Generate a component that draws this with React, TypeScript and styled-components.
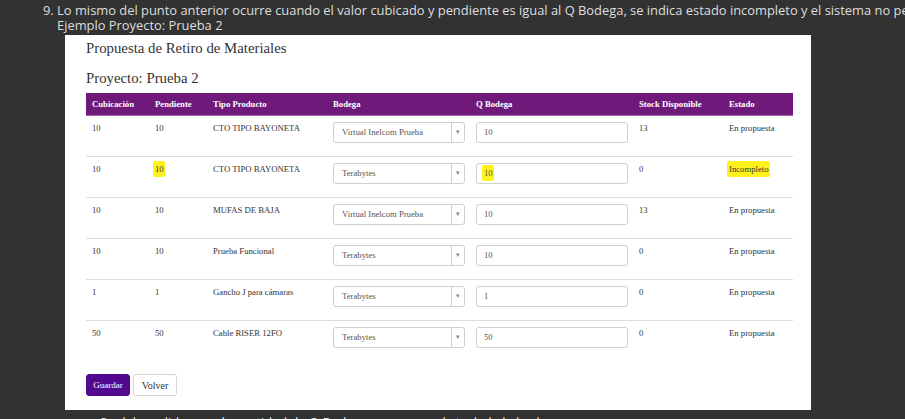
import React from 'react';
import styled, { createGlobalStyle } from 'styled-components';

const GlobalStyle = createGlobalStyle`
    body {
        margin: 0;
        background: #323232;
        overflow: hidden;
    }
`;

type Row = {
    cubicacion: string;
    pendiente: string;
    producto: string;
    bodega: string;
    qBodega: string;
    stock: string;
    estado: string;
    marked?: boolean;
};

const rows: Row[] = [
    { cubicacion: '10', pendiente: '10', producto: 'CTO TIPO BAYONETA', bodega: 'Virtual Inelcom Prueba', qBodega: '10', stock: '13', estado: 'En propuesta' },
    { cubicacion: '10', pendiente: '10', producto: 'CTO TIPO BAYONETA', bodega: 'Terabytes', qBodega: '10', stock: '0', estado: 'Incompleto', marked: true },
    { cubicacion: '10', pendiente: '10', producto: 'MUFAS DE BAJA', bodega: 'Virtual Inelcom Prueba', qBodega: '10', stock: '13', estado: 'En propuesta' },
    { cubicacion: '10', pendiente: '10', producto: 'Prueba Funcional', bodega: 'Terabytes', qBodega: '10', stock: '0', estado: 'En propuesta' },
    { cubicacion: '1', pendiente: '1', producto: 'Gancho J para cámaras', bodega: 'Terabytes', qBodega: '1', stock: '0', estado: 'En propuesta' },
    { cubicacion: '50', pendiente: '50', producto: 'Cable RISER 12FO', bodega: 'Terabytes', qBodega: '50', stock: '0', estado: 'En propuesta' },
];

const columns = [
    { label: 'Cubicación', width: 63 },
    { label: 'Pendiente', width: 58 },
    { label: 'Tipo Producto', width: 120 },
    { label: 'Bodega', width: 143 },
    { label: 'Q Bodega', width: 163 },
    { label: 'Stock Disponible', width: 90 },
    { label: 'Estado', width: 70 },
];

const Marked: React.FC<{ on?: boolean; children: React.ReactNode }> = ({ on, children }) =>
    on ? <Highlight>{children}</Highlight> : <>{children}</>;

const App: React.FC = () => {
    return (
        <Page>
            <GlobalStyle />
            <Note>
                <NoteLine $indent={43}>
                    9. Lo mismo del punto anterior ocurre cuando el valor cubicado y pendiente es igual al Q Bodega, se indica estado incompleto y el sistema no permite guardar.
                </NoteLine>
                <NoteLine $indent={57}>Ejemplo Proyecto: Prueba 2</NoteLine>
            </Note>

            <Panel>
                <Title>Propuesta de Retiro de Materiales</Title>
                <Subtitle>Proyecto: Prueba 2</Subtitle>

                <Table>
                    <colgroup>
                        {columns.map((c) => (
                            <col key={c.label} style={{ width: c.width }} />
                        ))}
                    </colgroup>
                    <thead>
                        <tr>
                            {columns.map((c) => (
                                <Th key={c.label}>{c.label}</Th>
                            ))}
                        </tr>
                    </thead>
                    <tbody>
                        {rows.map((r, i) => (
                            <Tr key={i}>
                                <Td>{r.cubicacion}</Td>
                                <Td>
                                    <Marked on={r.marked}>{r.pendiente}</Marked>
                                </Td>
                                <Td>{r.producto}</Td>
                                <Td>
                                    <Select>
                                        <SelectValue>{r.bodega}</SelectValue>
                                        <SelectArrow>▾</SelectArrow>
                                    </Select>
                                </Td>
                                <Td>
                                    <Input>
                                        <Marked on={r.marked}>{r.qBodega}</Marked>
                                    </Input>
                                </Td>
                                <Td>{r.stock}</Td>
                                <Td>
                                    <Marked on={r.marked}>{r.estado}</Marked>
                                </Td>
                            </Tr>
                        ))}
                    </tbody>
                </Table>

                <Actions>
                    <PrimaryButton>Guardar</PrimaryButton>
                    <DefaultButton>Volver</DefaultButton>
                </Actions>
            </Panel>

            <BottomNote>
                <NoteLine $indent={100}>
                    Se debe validar que la cantidad de Q Bodega no supere el stock de la bodega.
                </NoteLine>
            </BottomNote>
        </Page>
    );
};

const Page = styled.div`
    width: 905px;
    height: 419px;
    padding-top: 3px;
    box-sizing: border-box;
    overflow: hidden;
`;

const Note = styled.div`
    font-family: 'Open Sans', 'Liberation Sans', sans-serif;
    font-size: 12.9px;
    line-height: 15px;
    color: #dedede;
`;

const BottomNote = styled(Note)`
    margin-top: 5px;
`;

const NoteLine = styled.div<{ $indent: number }>`
    padding-left: ${({ $indent }) => $indent}px;
    white-space: nowrap;
    overflow: hidden;
`;

const Panel = styled.div`
    margin: 2px 0 0 65px;
    width: 746px;
    height: 375px;
    box-sizing: border-box;
    padding: 3px 18px 0 21px;
    background: #fff;
    font-family: 'Liberation Serif', 'Times New Roman', serif;
    color: #333;
`;

const Title = styled.div`
    font-size: 14.8px;
    line-height: 20px;
`;

const Subtitle = styled.div`
    margin-top: 10px;
    font-size: 14.8px;
    line-height: 20px;
`;

const Table = styled.table`
    margin-top: 5px;
    width: 707px;
    border-collapse: collapse;
    table-layout: fixed;
    font-size: 8.7px;
`;

const Th = styled.th`
    height: 22px;
    padding: 0 6px;
    box-sizing: border-box;
    background: #6f1a7b;
    border-bottom: 1px solid #a46aac;
    color: #fff;
    font-weight: bold;
    text-align: left;
    vertical-align: middle;
    white-space: nowrap;
`;

const Tr = styled.tr`
    & + & td {
        border-top: 1px solid #dedede;
    }
`;

const Td = styled.td`
    height: 41px;
    box-sizing: border-box;
    padding: 6px 5px 0 6px;
    vertical-align: top;
    line-height: 12px;
    color: #333;
`;

const Highlight = styled.span`
    background: #fff21c;
    padding: 3px 1px 3px 2px;
    margin-left: -2px;
    border-radius: 2px;
`;

const Select = styled.div`
    display: flex;
    height: 21px;
    box-sizing: border-box;
    border: 1px solid #cfcfcf;
    border-radius: 3px;
    color: #555;
`;

const SelectValue = styled.div`
    flex: 1;
    padding-left: 8px;
    line-height: 19px;
    white-space: nowrap;
    overflow: hidden;
`;

const SelectArrow = styled.div`
    width: 12px;
    border-left: 1px solid #cfcfcf;
    font-size: 7px;
    color: #888;
    text-align: center;
    line-height: 19px;
`;

const Input = styled.div`
    height: 21px;
    box-sizing: border-box;
    border: 1px solid #cfcfcf;
    border-radius: 3px;
    padding-left: 7px;
    line-height: 19px;
    color: #555;
`;

const Actions = styled.div`
    display: flex;
    gap: 3px;
    margin-top: 13px;
`;

const PrimaryButton = styled.button`
    width: 44px;
    height: 22px;
    padding: 0;
    border: 1px solid #4e0a8c;
    border-radius: 3px;
    background: #51098f;
    color: #fff;
    font-family: 'Liberation Serif', 'Times New Roman', serif;
    font-size: 9px;
`;

const DefaultButton = styled.button`
    width: 44px;
    height: 22px;
    padding: 0;
    border: 1px solid #d6d6d6;
    border-radius: 3px;
    background: #fff;
    color: #333;
    font-family: 'Liberation Serif', 'Times New Roman', serif;
    font-size: 10px;
`;

export default App;
